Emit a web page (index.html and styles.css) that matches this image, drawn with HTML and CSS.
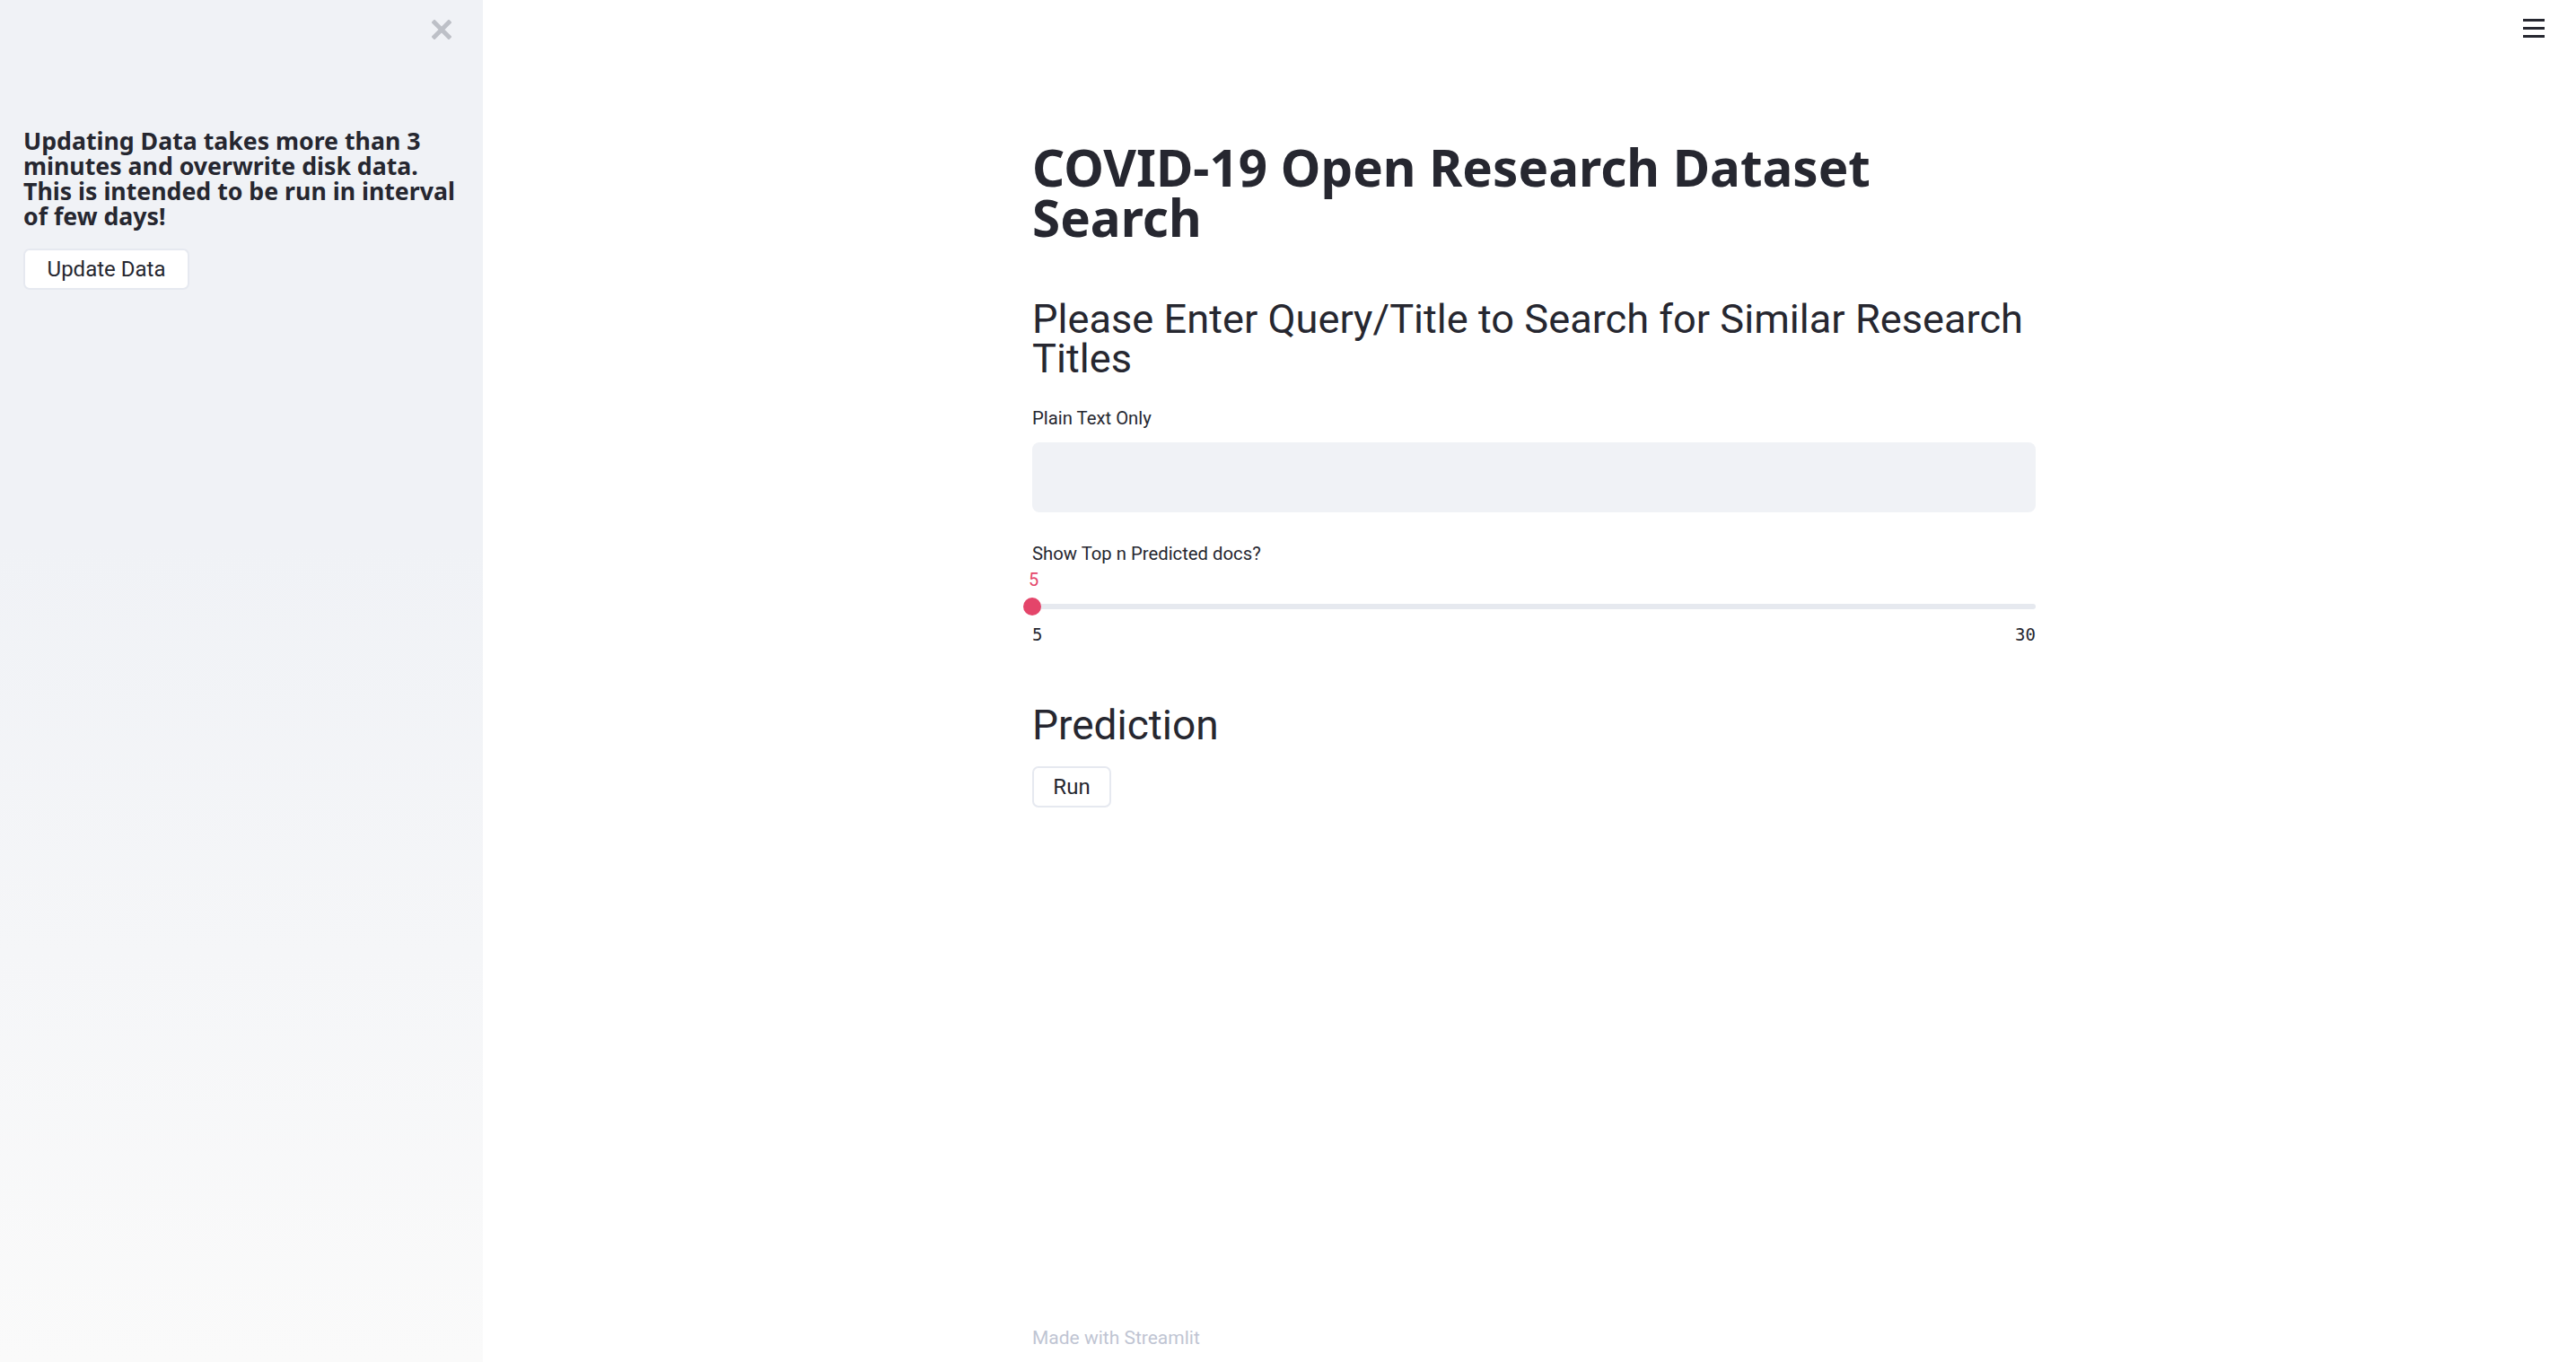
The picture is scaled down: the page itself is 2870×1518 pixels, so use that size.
FILE: index.html
```html
<!DOCTYPE html>
<html lang="en">
<head>
<meta charset="utf-8">
<title>COVID-19 Open Research Dataset Search</title>
<link rel="stylesheet" href="styles.css">
</head>
<body>
<aside class="sidebar">
  <div class="sidebar-top">
    <svg class="close-icon" width="22" height="22" viewBox="0 0 22 22" aria-label="Close">
      <path d="M3 3 L19 19 M19 3 L3 19" stroke="#bdc0c7" stroke-width="5" stroke-linecap="square" fill="none"/>
    </svg>
  </div>
  <p class="sidebar-text">Updating Data takes more than 3 minutes and overwrite disk data. This is intended to be run in interval of few days!</p>
  <div class="sidebar-actions">
    <button class="btn btn-update">Update Data</button>
  </div>
</aside>
<main class="main">
  <div class="menu-icon" aria-label="Menu">
    <span></span><span></span><span></span>
  </div>
  <div class="block">
    <h1 class="title">COVID-19 Open Research Dataset Search</h1>
    <h3 class="subtitle">Please Enter Query/Title to Search for Similar Research Titles</h3>
    <label class="field-label">Plain Text Only</label>
    <div class="text-input"></div>
    <label class="field-label label-slider">Show Top n Predicted docs?</label>
    <div class="slider-value">5</div>
    <div class="slider">
      <div class="slider-track"></div>
      <div class="slider-thumb"></div>
    </div>
    <div class="slider-range"><span>5</span><span>30</span></div>
    <h2 class="section-title">Prediction</h2>
    <div class="actions">
      <button class="btn btn-run">Run</button>
    </div>
  </div>
  <footer class="footer">
    <div class="footer-inner">Made with Streamlit</div>
  </footer>
</main>
</body>
</html>
```

FILE: styles.css
```css
html, body {
  margin: 0;
  padding: 0;
  height: 100%;
}

body {
  display: flex;
  height: 1518px;
  overflow: hidden;
  font-family: Roboto, "Noto Sans", sans-serif;
  color: #262730;
  background: #ffffff;
}

.sidebar {
  width: 538px;
  flex: 0 0 538px;
  box-sizing: border-box;
  padding: 0 24px 0 26px;
  background-image: linear-gradient(180deg, #f0f2f6 0%, #f0f2f6 40%, #fafafa 100%);
  display: flex;
  flex-direction: column;
}

.sidebar-top {
  display: flex;
  justify-content: flex-end;
  padding-top: 22px;
  padding-right: 11px;
}

.close-icon {
  display: block;
}

.sidebar-text {
  margin: 99px 0 0 0;
  font-family: "Noto Sans", Roboto, sans-serif;
  font-size: 26.7px;
  line-height: 28px;
  font-weight: 700;
}

.sidebar-actions {
  margin-top: 22px;
}

.btn {
  font-family: Roboto, "Noto Sans", sans-serif;
  background: #ffffff;
  border: 2px solid #e6e9f0;
  border-radius: 7px;
  color: #262730;
  height: 46px;
  box-sizing: border-box;
  font-size: 24px;
  padding: 0;
  cursor: pointer;
}

.btn-update {
  width: 185px;
}

.btn-run {
  width: 88px;
}

.main {
  flex: 1;
  position: relative;
  display: flex;
  flex-direction: column;
  align-items: center;
  padding-left: 10px;
}

.menu-icon {
  position: absolute;
  top: 21px;
  right: 35px;
  width: 24px;
  display: flex;
  flex-direction: column;
  gap: 6px;
}

.menu-icon span {
  display: block;
  height: 3px;
  background: #262730;
}

.block {
  width: 1118px;
  padding-top: 159px;
}

.title {
  margin: 0;
  font-family: "Noto Sans", Roboto, sans-serif;
  font-size: 56.5px;
  line-height: 56px;
  font-weight: 700;
}

.subtitle {
  margin: 63px 0 0 0;
  font-size: 45.2px;
  line-height: 44px;
  font-weight: 400;
}

.field-label {
  display: block;
  margin-top: 32px;
  font-size: 20.3px;
  line-height: 24px;
}

.text-input {
  margin-top: 15px;
  height: 78px;
  background: #f0f2f6;
  border-radius: 8px;
}

.label-slider {
  margin-top: 34px;
}

.slider-value {
  margin-top: 5px;
  font-size: 20px;
  line-height: 24px;
  color: #e4456a;
  margin-left: -4px;
}

.slider {
  position: relative;
  margin-top: 8px;
  height: 20px;
  display: flex;
  align-items: center;
}

.slider-track {
  flex: 1;
  height: 6px;
  border-radius: 3px;
  background: #e6e9ef;
}

.slider-thumb {
  position: absolute;
  left: -10px;
  top: 0;
  width: 20px;
  height: 20px;
  border-radius: 50%;
  background: #e4456a;
}

.slider-range {
  margin-top: 11px;
  display: flex;
  justify-content: space-between;
  font-family: "DejaVu Sans Mono", "Liberation Mono", monospace;
  font-size: 19px;
  line-height: 20px;
}

.section-title {
  margin: 65px 0 0 0;
  font-size: 46px;
  line-height: 52px;
  font-weight: 400;
}

.actions {
  margin-top: 20px;
}

.footer {
  margin-top: auto;
  width: 1118px;
  padding-bottom: 15px;
}

.footer-inner {
  font-size: 21px;
  line-height: 24px;
  color: #bfc5d3;
}
```
